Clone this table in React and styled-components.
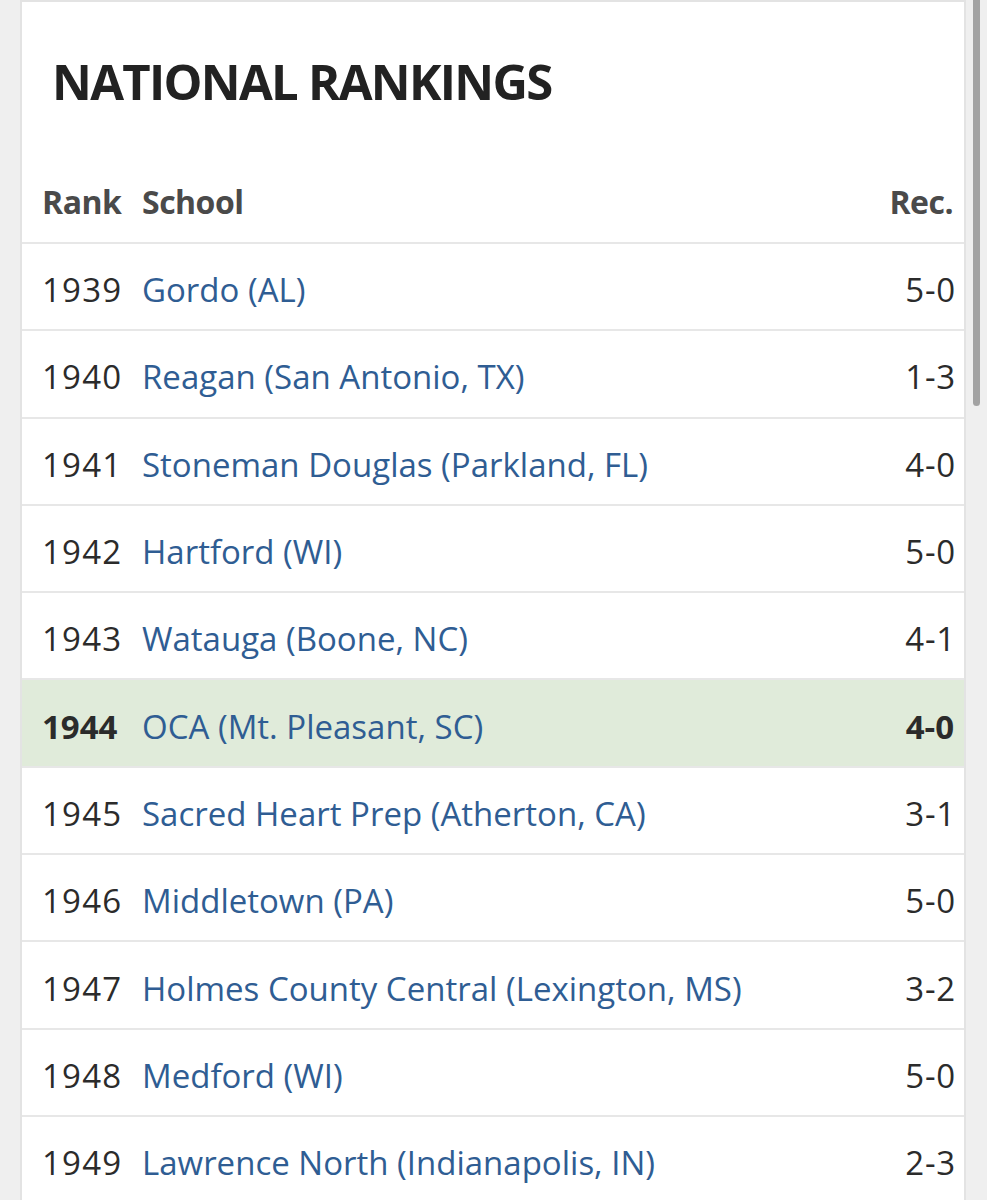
import React from "react";
import styled, { createGlobalStyle } from "styled-components";

const Global = createGlobalStyle`
  html, body { margin: 0; padding: 0; background: #efefef; }
  body { font-family: "Open Sans", "Liberation Sans", sans-serif; overflow: hidden; }
`;

const Page = styled.div`
  display: flex;
  align-items: flex-start;
  height: 1200px;
  overflow: hidden;
`;

const Card = styled.section`
  margin-left: 20px;
  width: 946px;
  box-sizing: border-box;
  background: #fff;
  border: 2px solid #e3e3e3;
  border-bottom: none;
`;

const Title = styled.h2`
  margin: 0;
  padding: 51px 0 0 30px;
  height: 158px;
  box-sizing: border-box;
  font-size: 49px;
  font-weight: 700;
  color: #222;
  line-height: 56px;
  letter-spacing: -1.7px;
`;

const Row = styled.div`
  display: grid;
  grid-template-columns: 100px 1fr auto;
  align-items: center;
  height: ${(p) => (p.$header ? "84px" : "87.3px")};
  box-sizing: border-box;
  padding: ${(p) => (p.$header ? "0 11px 0 20px" : "6px 11px 0 20px")};
  border-bottom: 2.5px solid #e7e7e7;
  background: ${(p) => (p.$hl ? "#e0ebda" : "transparent")};
  font-size: ${(p) => (p.$header ? "32px" : "33px")};
  color: #333;
`;

const HeadCell = styled.div`
  font-weight: 700;
  color: #4a4a4a;
  letter-spacing: -0.5px;
  text-align: ${(p) => (p.$right ? "right" : "left")};
`;

const Rank = styled.div`
  font-weight: ${(p) => (p.$bold ? 700 : 400)};
  color: #2b2b2b;
  letter-spacing: ${(p) => (p.$bold ? "0" : "1.2px")};
`;

const School = styled.a`
  color: #2f5d93;
  text-decoration: none;
`;

const Rec = styled.div`
  text-align: right;
  font-weight: ${(p) => (p.$bold ? 700 : 400)};
  color: #2b2b2b;
  letter-spacing: ${(p) => (p.$bold ? "0" : "0.8px")};
  margin-right: ${(p) => (p.$bold ? "-1px" : "-3px")};
`;

const ScrollThumb = styled.div`
  position: fixed;
  top: -4px;
  left: 973px;
  width: 7px;
  height: 410px;
  border-radius: 4px;
  background: #a3a3a3;
`;

const rows = [
  ["1939", "Gordo (AL)", "5-0"],
  ["1940", "Reagan (San Antonio, TX)", "1-3"],
  ["1941", "Stoneman Douglas (Parkland, FL)", "4-0"],
  ["1942", "Hartford (WI)", "5-0"],
  ["1943", "Watauga (Boone, NC)", "4-1"],
  ["1944", "OCA (Mt. Pleasant, SC)", "4-0", true],
  ["1945", "Sacred Heart Prep (Atherton, CA)", "3-1"],
  ["1946", "Middletown (PA)", "5-0"],
  ["1947", "Holmes County Central (Lexington, MS)", "3-2"],
  ["1948", "Medford (WI)", "5-0"],
  ["1949", "Lawrence North (Indianapolis, IN)", "2-3"],
];

export default function App() {
  return (
    <Page>
      <Global />
      <Card>
        <Title>NATIONAL RANKINGS</Title>
        <Row $header>
          <HeadCell>Rank</HeadCell>
          <HeadCell>School</HeadCell>
          <HeadCell $right>Rec.</HeadCell>
        </Row>
        {rows.map(([r, s, rec, hl]) => (
          <Row key={r} $hl={hl}>
            <Rank $bold={hl}>{r}</Rank>
            <School href="#">{s}</School>
            <Rec $bold={hl}>{rec}</Rec>
          </Row>
        ))}
      </Card>
      <ScrollThumb />
    </Page>
  );
}
